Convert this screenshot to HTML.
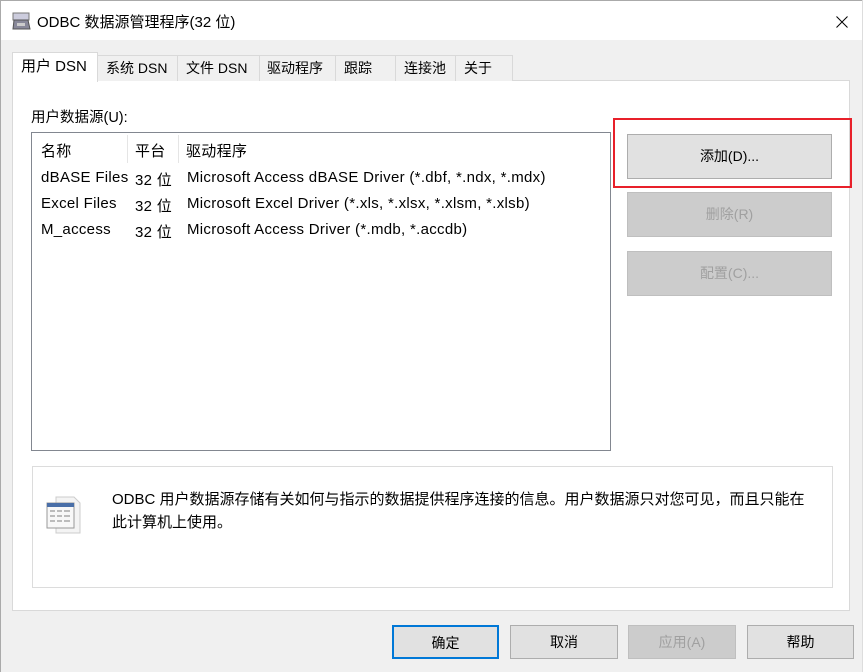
<!DOCTYPE html>
<html><head><meta charset="utf-8"><style>
*{margin:0;padding:0;box-sizing:border-box}
body{width:863px;height:672px;background:#f0f0f0;font-family:"Liberation Sans","Noto Sans CJK SC",sans-serif;font-size:14px;color:#000;position:relative;overflow:hidden}
.a{position:absolute}
.title{left:0;top:0;width:863px;height:40px;background:#fff;border-top:1px solid #aaa}
.tab{position:absolute;top:55px;height:26px;background:#f0f0f0;border:1px solid #d9d9d9;border-bottom:none;font-size:14px;line-height:24px;padding-left:8px}
.btn{position:absolute;background:#e1e1e1;border:1px solid #adadad;text-align:center;font-size:14px}
.dis{background:#cccccc;border-color:#bfbfbf;color:#a0a0a0}
.row{position:absolute;left:41px;font-size:15px;letter-spacing:0.3px;top:0}
</style></head><body>
<div class="a title"></div>
<div class="a" style="left:0;top:0;width:1px;height:672px;background:#aaa"></div>
<div class="a" style="right:0;top:0;width:1px;height:672px;background:#ddd"></div>
<svg class="a" style="left:12px;top:12px" width="20" height="20" viewBox="0 0 20 20"><rect x="1" y="1" width="16" height="7" fill="#ccd" stroke="#777"/><path d="M2 8h14l2 9H1z" fill="#889" stroke="#555"/><rect x="5" y="11" width="8" height="3" fill="#ccc"/></svg>
<div class="a" style="left:37px;top:11px;font-size:15px">ODBC 数据源管理程序(32 位)</div>
<svg class="a" style="left:836px;top:16px" width="12" height="12"><path d="M0.5 0.5L11.5 11.5M11.5 0.5L0.5 11.5" stroke="#000" stroke-width="1"/></svg>

<div class="a" style="left:12px;top:80px;width:838px;height:531px;background:#fff;border:1px solid #d9d9d9"></div>
<div class="tab" style="left:97px;width:81px">系统 DSN</div>
<div class="tab" style="left:177px;width:83px">文件 DSN</div>
<div class="tab" style="left:259px;width:77px;padding-left:7px">驱动程序</div>
<div class="tab" style="left:335px;width:61px">跟踪</div>
<div class="tab" style="left:395px;width:61px">连接池</div>
<div class="tab" style="left:455px;width:58px">关于</div>
<div class="tab" style="left:12px;top:52px;height:30px;width:86px;background:#fff;line-height:28px;font-size:15px">用户 DSN</div>

<div class="a" style="left:31px;top:106px;font-size:14.5px">用户数据源(U):</div>
<div class="a" style="left:31px;top:132px;width:580px;height:319px;border:1px solid #828790;background:#fff"></div>
<div class="a" style="left:127px;top:135px;width:1px;height:28px;background:#e5e5e5"></div>
<div class="a" style="left:178px;top:135px;width:1px;height:28px;background:#e5e5e5"></div>
<div class="row" style="top:140px">名称</div>
<div class="row" style="top:140px;left:135px">平台</div>
<div class="row" style="top:140px;left:186px">驱动程序</div>
<div class="row" style="top:169px">dBASE Files</div><div class="row" style="top:169px;left:135px">32 位</div><div class="row" style="top:169px;left:187px">Microsoft Access dBASE Driver (*.dbf, *.ndx, *.mdx)</div>
<div class="row" style="top:195px">Excel Files</div><div class="row" style="top:195px;left:135px">32 位</div><div class="row" style="top:195px;left:187px">Microsoft Excel Driver (*.xls, *.xlsx, *.xlsm, *.xlsb)</div>
<div class="row" style="top:221px">M_access</div><div class="row" style="top:221px;left:135px">32 位</div><div class="row" style="top:221px;left:187px">Microsoft Access Driver (*.mdb, *.accdb)</div>

<div class="a" style="left:613px;top:118px;width:239px;height:70px;border:2px solid #e8202a"></div>
<div class="btn" style="left:627px;top:134px;width:205px;height:45px;line-height:43px">添加(D)...</div>
<div class="btn dis" style="left:627px;top:192px;width:205px;height:45px;line-height:43px">删除(R)</div>
<div class="btn dis" style="left:627px;top:251px;width:205px;height:45px;line-height:43px">配置(C)...</div>

<div class="a" style="left:32px;top:466px;width:801px;height:122px;border:1px solid #dcdcdc"></div>
<svg class="a" style="left:46px;top:495px" width="40" height="40" viewBox="0 0 40 40"><path d="M10 2h18l6 6v30H10z" fill="#f4f4f4" stroke="#ccc"/><text x="22" y="18" font-size="7" fill="#9ab" font-family="Liberation Sans">0</text><text x="22" y="30" font-size="7" fill="#9ab" font-family="Liberation Sans">0</text><rect x="1" y="8" width="27" height="25" fill="#f8f8f8" stroke="#999"/><rect x="1" y="8" width="27" height="4" fill="#4a6fa8"/><g stroke="#999" stroke-width="1.2"><path d="M4 16h5M11 16h5M18 16h6M4 21h5M11 21h5M18 21h6M4 26h5M11 26h5M18 26h6"/></g></svg>
<div class="a" style="left:112px;top:488px;width:700px;line-height:23px;font-size:15px">ODBC 用户数据源存储有关如何与指示的数据提供程序连接的信息。用户数据源只对您可见，而且只能在<br>此计算机上使用。</div>

<div class="btn" style="left:392px;top:625px;width:107px;height:34px;line-height:32px;border:2px solid #0078d7">确定</div>
<div class="btn" style="left:510px;top:625px;width:108px;height:34px;line-height:32px">取消</div>
<div class="btn dis" style="left:628px;top:625px;width:108px;height:34px;line-height:32px">应用(A)</div>
<div class="btn" style="left:747px;top:625px;width:107px;height:34px;line-height:32px">帮助</div>
</body></html>
